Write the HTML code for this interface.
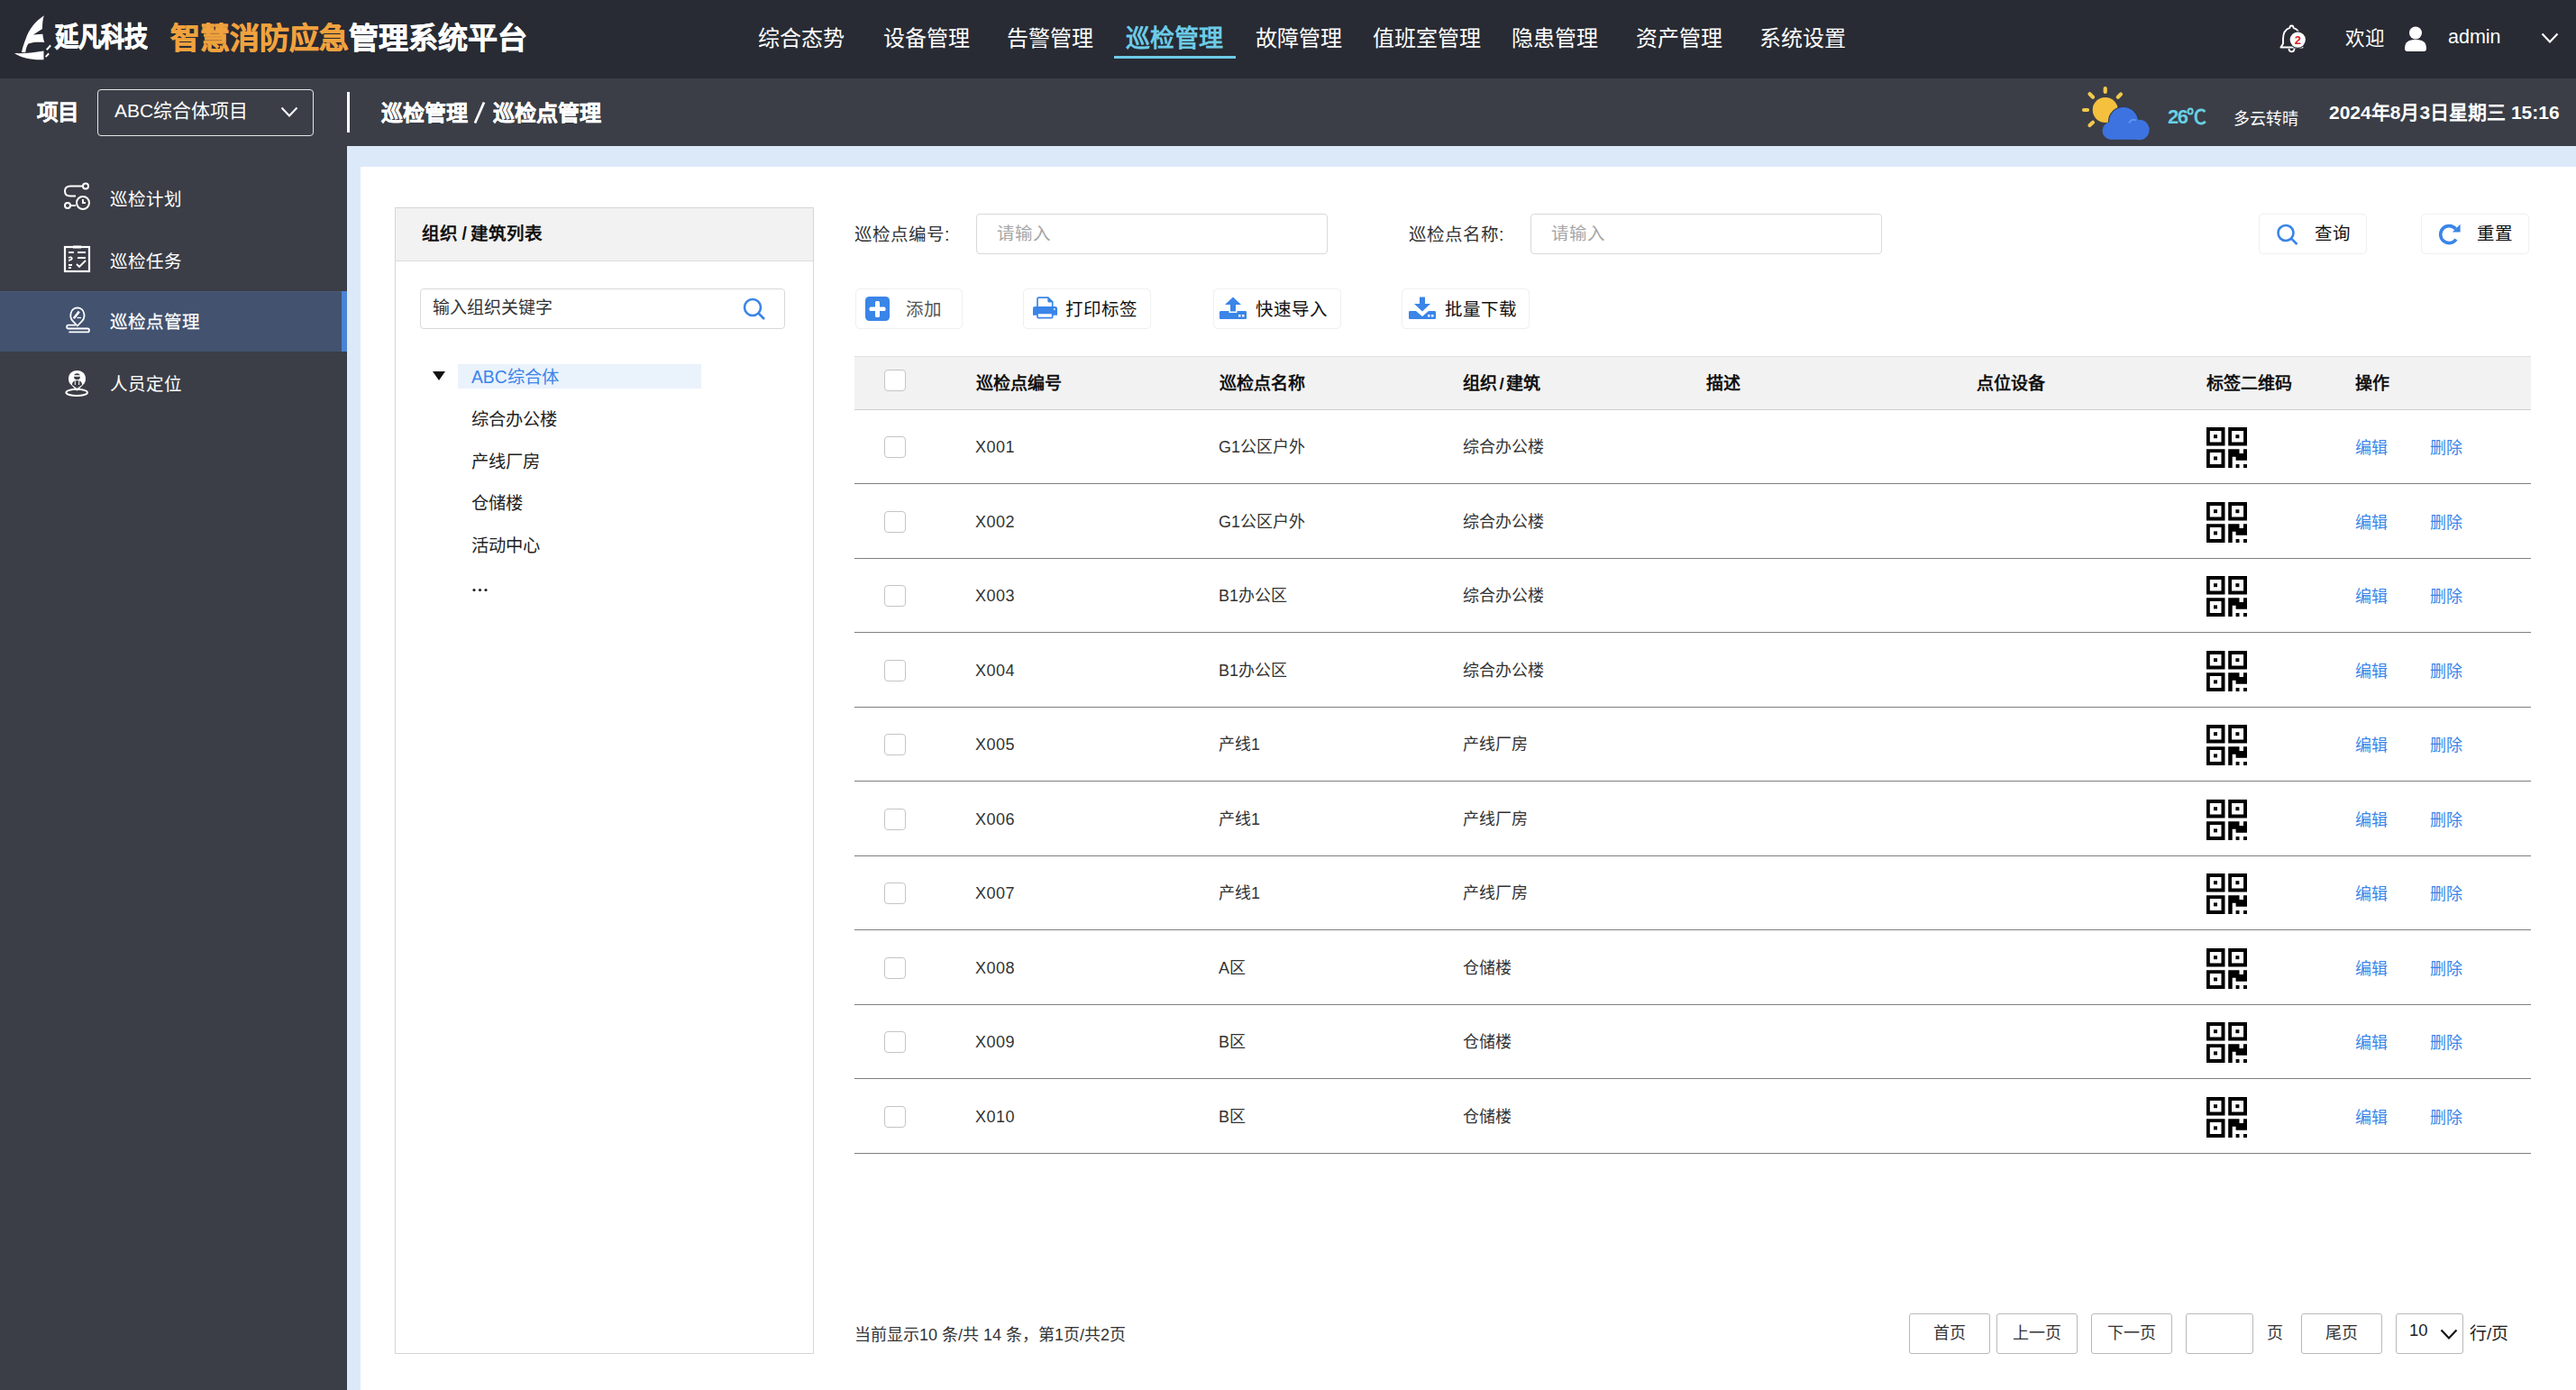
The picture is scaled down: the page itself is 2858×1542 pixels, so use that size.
<!DOCTYPE html>
<html lang="zh-CN"><head><meta charset="utf-8">
<style>
*{margin:0;padding:0;box-sizing:border-box}
html,body{width:2858px;height:1542px;overflow:hidden;background:#fff;font-family:"Liberation Sans",sans-serif;}
.a{position:absolute;line-height:1;white-space:nowrap}
#hdr{position:absolute;left:0;top:0;width:2858px;height:87px;background:#282b33}
#sub{position:absolute;left:0;top:87px;width:2858px;height:75px;background:#3b3e47}
#side{position:absolute;left:0;top:162px;width:385px;height:1380px;background:#3b3e47}
#cbg{position:absolute;left:385px;top:162px;width:2473px;height:1380px;background:#dce9f9}
#wp{position:absolute;left:400px;top:185px;width:2458px;height:1357px;background:#fff}
.nav{color:#fff;font-size:24px}
.w{color:#fff}
.btn{border:1px solid #f0f0f0;border-radius:5px;background:#fff;box-shadow:0 0 1px rgba(0,0,0,0.04)}
.th{font-size:19px;font-weight:bold;color:#111;top:416px}
.td{font-size:18px;color:#333}
.cb{width:24px;height:24px;border:1.5px solid #c4c4c4;border-radius:4px;background:#fff}
.sep{left:948px;width:1860px;height:1px;background:#7f7f7f}
.pb{top:1457px;height:45px;border:1px solid #b8b8b8;border-radius:3px;font-size:18px;color:#333;text-align:center;line-height:43px}
.lk{font-size:18px;color:#3a85e8}
</style></head><body>
<div id="hdr"></div>
<div id="sub"></div>
<div id="side"></div>
<div id="cbg"></div>
<div id="wp"></div>

<!-- HEADER -->
<svg class="a" style="left:0;top:0" width="70" height="75" viewBox="0 0 70 75">
 <path d="M48.8 17.2 C43 21 39 25 36.2 28.7 C32 34 30 39 28.7 42.7 C26.5 48 25 53 24 58 L28.2 58.2 C29 53 30 50 31.5 48.4 C37 46.5 44 46.5 49.3 47 C48 43 47.5 40 47.4 37.8 L36.9 38.5 L47 32 C47 26 47.5 21 48.8 17.2 Z" fill="#fff"/>
 <path d="M16 59 C25 59.5 38 58.5 48.5 56.5 L48.5 66.2 C36 66.8 24 64.5 16 59 Z" fill="#fff"/>
 <path d="M51 54.5 L55.5 49.5 L56.8 51.2 L52.5 56 Z" fill="#fff"/>
 <path d="M50 62.5 L53.5 58.5 L54.8 60.2 L51.2 63.8 Z" fill="#fff"/>
</svg>
<div class="a w" style="left:61px;top:26px;font-size:26px;font-weight:700;letter-spacing:-0.5px;-webkit-text-stroke:0.8px #fff;transform:scaleY(1.15);transform-origin:0 0">延凡科技</div>
<div class="a" style="left:189px;top:26px;font-size:33px;font-weight:700;color:#f0a23e;-webkit-text-stroke:0.6px currentColor">智慧消防应急<span style="color:#fff;-webkit-text-stroke:0.6px #fff">管理系统平台</span></div>
<div class="a nav" style="left:841px;top:31px">综合态势</div>
<div class="a nav" style="left:980px;top:31px">设备管理</div>
<div class="a nav" style="left:1117px;top:31px">告警管理</div>
<div class="a nav" style="left:1249px;top:30px;font-size:27px;font-weight:bold;color:#6ccbe8">巡检管理</div>
<div class="a" style="left:1236px;top:62px;width:135px;height:3px;background:#6ccbe8"></div>
<div class="a nav" style="left:1393px;top:31px">故障管理</div>
<div class="a nav" style="left:1523px;top:31px">值班室管理</div>
<div class="a nav" style="left:1677px;top:31px">隐患管理</div>
<div class="a nav" style="left:1815px;top:31px">资产管理</div>
<div class="a nav" style="left:1952px;top:31px">系统设置</div>
<!-- bell -->
<svg class="a" style="left:2520px;top:20px" width="45" height="42" viewBox="0 0 45 42">
 <path d="M22.5 8.5 C21 8.5 20.5 9.8 20.5 10.8 C15.5 12.5 13 17 13 23 L13 28.5 L10.5 32.5 L34.5 32.5 L32 28.5 L32 23 C32 17 29.5 12.5 24.5 10.8 C24.5 9.8 24 8.5 22.5 8.5 Z" fill="none" stroke="#fff" stroke-width="1.9" stroke-linejoin="round"/>
 <path d="M19.5 34 C19.5 36.5 21 37.3 22.5 37.3 C24 37.3 25.5 36.5 25.5 34" fill="none" stroke="#fff" stroke-width="1.8"/>
 <circle cx="29.3" cy="24.1" r="9.8" fill="#282b33"/>
 <circle cx="29.3" cy="24.1" r="8.6" fill="#fff"/>
 <text x="29.3" y="28.8" font-size="13" font-weight="bold" fill="#d9232d" text-anchor="middle" font-family="Liberation Sans">2</text>
</svg>
<div class="a w" style="left:2602px;top:33px;font-size:21.5px">欢迎</div>
<svg class="a" style="left:2667px;top:29px" width="26" height="28" viewBox="0 0 26 28">
 <circle cx="13" cy="7.5" r="7" fill="#fff"/>
 <path d="M1 25 C1 17 6 15 13 15 C20 15 25 17 25 25 C25 27 24 28 22 28 L4 28 C2 28 1 27 1 25 Z" fill="#fff"/>
</svg>
<div class="a w" style="left:2716px;top:31px;font-size:21.5px">admin</div>
<svg class="a" style="left:2819px;top:36px" width="20" height="13" viewBox="0 0 20 13"><path d="M1.5 1.5 L10 10.5 L18.5 1.5" fill="none" stroke="#fff" stroke-width="2.2"/></svg>

<!-- SUBHEADER -->
<div class="a w" style="left:41px;top:114px;font-size:23.5px;font-weight:bold;-webkit-text-stroke:0.4px #fff">项目</div>
<div class="a" style="left:108px;top:99px;width:240px;height:52px;border:1.5px solid #e6e6e6;border-radius:4px"></div>
<div class="a w" style="left:127px;top:112px;font-size:21px">ABC综合体项目</div>
<svg class="a" style="left:311px;top:118px" width="20" height="13" viewBox="0 0 20 13"><path d="M1.5 1.5 L10 10.5 L18.5 1.5" fill="none" stroke="#fff" stroke-width="2"/></svg>
<div class="a" style="left:385px;top:102px;width:3px;height:45px;background:#fff"></div>
<div class="a w" style="left:423px;top:114px;font-size:24px;font-weight:bold;-webkit-text-stroke:0.4px #fff">巡检管理</div><svg class="a" style="left:524px;top:112px" width="16" height="26" viewBox="0 0 16 26"><path d="M13 1.5 L3 24.5" stroke="#fff" stroke-width="2.8"/></svg><div class="a w" style="left:547px;top:114px;font-size:24px;font-weight:bold;-webkit-text-stroke:0.4px #fff">巡检点管理</div>
<!-- weather -->
<svg class="a" style="left:2300px;top:88px" width="90" height="75" viewBox="0 0 90 75">
 <g stroke="#f2c94c" stroke-width="4.2" stroke-linecap="round">
  <line x1="35.7" y1="10" x2="35.7" y2="14"/>
  <line x1="12" y1="34" x2="16" y2="34"/>
  <line x1="18.5" y1="16.3" x2="22" y2="19.8"/>
  <line x1="53" y1="16.5" x2="49.8" y2="19.8"/>
  <line x1="22" y1="47.8" x2="18.5" y2="51"/>
 </g>
 <circle cx="35.7" cy="34" r="14" fill="#f4c03e"/>
 <g fill="#3a6edb" stroke="#333844" stroke-width="1.2">
  <circle cx="56" cy="47" r="16.5"/>
 </g>
 <g fill="#3d73e0">
  <circle cx="56" cy="47.5" r="16"/>
  <circle cx="73.3" cy="56" r="11.3"/>
  <circle cx="42.5" cy="57" r="10"/>
  <rect x="42.5" y="50" width="31" height="16.8"/>
 </g>
 <path d="M62 48.5 C64 45 67 44 70 45.5" fill="none" stroke="#5f93f0" stroke-width="2"/>
</svg>
<div class="a" style="left:2405px;top:119px;font-size:22px;font-weight:bold;color:#67d0e6;letter-spacing:-1.5px">26℃</div>
<div class="a w" style="left:2478px;top:123px;font-size:18px">多云转晴</div>
<div class="a w" style="left:2584px;top:114px;font-size:21px;font-weight:bold">2024年8月3日星期三 15:16</div>

<!-- SIDEBAR -->
<div class="a" style="left:0;top:323px;width:385px;height:67px;background:#42526f;border-top:1px solid #4a5a78"></div>
<div class="a" style="left:379px;top:323px;width:6px;height:67px;background:#4a84d6"></div>
<svg class="a" style="left:70px;top:202px" width="31" height="31" viewBox="0 0 31 31" fill="none" stroke="#fff" stroke-width="2">
 <circle cx="25" cy="4.5" r="3"/>
 <path d="M22 4.5 H8 C4 4.5 2 7 2 10 C2 13 4 15.5 8 15.5 H14"/>
 <circle cx="5" cy="26" r="3"/>
 <path d="M8 26 H14"/>
 <circle cx="22" cy="23" r="7"/>
 <path d="M22 19 V23 H25"/>
</svg>
<div class="a w" style="left:122px;top:211.5px;font-size:19.5px">巡检计划</div>
<svg class="a" style="left:70px;top:271px" width="31" height="32" viewBox="0 0 31 32" fill="none" stroke="#fff" stroke-width="2.2">
 <rect x="2" y="3" width="27" height="27"/>
 <path d="M11 3 H20" stroke-width="3"/>
 <path d="M6 9 H12 M16 9 H25 M6 15 C10 13 12 17 6 18 M16 15 H25 M6 23 H10 M6 26 H9 M15 22 L18 25 L25 18" stroke-width="1.8"/>
</svg>
<div class="a w" style="left:122px;top:281px;font-size:19.5px">巡检任务</div>
<svg class="a" style="left:60px;top:330px" width="50" height="50" viewBox="0 0 50 50" fill="none" stroke="#fff">
 <path d="M25.9 31.5 L20.5 25.8 C17 22 17.3 12 25.9 11.4 C34.5 12 34.8 22 31.3 25.8 Z" stroke-width="1.8"/>
 <path d="M21.8 23.2 L27.8 15.6" stroke-width="2.6"/>
 <path d="M25.5 22.5 H30" stroke-width="1.3"/>
 <path d="M24 30.6 H15.8 C13.6 30.6 13.6 34.5 15.8 34.5 H37.3 C39.5 34.5 39.5 38.4 37.3 38.4 H16.4" stroke-width="1.8"/>
</svg>
<div class="a w" style="left:122px;top:348px;font-size:19.5px;-webkit-text-stroke:0.25px #fff">巡检点管理</div>
<svg class="a" style="left:60px;top:400px" width="50" height="50" viewBox="0 0 50 50">
 <path d="M25.5 33.8 L18.3 26.3 C14.2 22 15 11.3 25.5 11 C36 11.3 36.8 22 32.7 26.3 Z" fill="#fff"/>
 <circle cx="25.5" cy="17.8" r="3.5" fill="#3b3e47"/>
 <rect x="21" y="16.2" width="9" height="1.6" fill="#fff"/>
 <path d="M20 27 C20 23.5 22 22.2 25.5 22.2 C29 22.2 31 23.5 31 27 L25.5 31 Z" fill="#3b3e47"/>
 <path d="M23.3 22.5 V27 M27.7 22.5 V27" stroke="#fff" stroke-width="1"/>
 <ellipse cx="25.2" cy="35.4" rx="11.8" ry="3.6" fill="none" stroke="#fff" stroke-width="2"/>
</svg>
<div class="a w" style="left:122px;top:417px;font-size:19.5px">人员定位</div>

<!-- TREE PANEL -->
<div class="a" style="left:438px;top:230px;width:465px;height:1272px;border:1px solid #d6d6d6;background:#fff"></div>
<div class="a" style="left:439px;top:231px;width:463px;height:59px;background:#f2f2f2;border-bottom:1px solid #dcdcdc"></div>
<div class="a" style="left:468px;top:250px;font-size:19.5px;font-weight:bold;color:#111">组织<span style="margin:0 4.5px">/</span>建筑列表</div>
<div class="a" style="left:466px;top:320px;width:405px;height:45px;border:1px solid #d9d9d9;border-radius:4px"></div>
<div class="a" style="left:480px;top:332px;font-size:19px;color:#333">输入组织关键字</div>
<svg class="a" style="left:823px;top:330px" width="28" height="26" viewBox="0 0 28 26" fill="none" stroke="#3a85e8" stroke-width="2.6">
 <circle cx="12" cy="11" r="9"/><path d="M18.5 17.5 L25 24"/>
</svg>
<svg class="a" style="left:480px;top:412px" width="14" height="10" viewBox="0 0 14 10"><path d="M0 0 H14 L7 10 Z" fill="#111"/></svg>
<div class="a" style="left:508px;top:404px;width:270px;height:27px;background:#eaf2fc"></div>
<div class="a" style="left:523px;top:409px;font-size:19.3px;color:#3a85e8">ABC综合体</div>
<div class="a" style="left:523px;top:455.5px;font-size:19.3px;color:#222">综合办公楼</div>
<div class="a" style="left:523px;top:502.5px;font-size:19.3px;color:#222">产线厂房</div>
<div class="a" style="left:523px;top:548.5px;font-size:19.3px;color:#222">仓储楼</div>
<div class="a" style="left:523px;top:595.5px;font-size:19.3px;color:#222">活动中心</div>
<svg class="a" style="left:524px;top:652px" width="17" height="5" viewBox="0 0 17 5" fill="#222"><circle cx="2" cy="2.5" r="1.6"/><circle cx="8.5" cy="2.5" r="1.6"/><circle cx="15" cy="2.5" r="1.6"/></svg>

<!-- TOOLBAR -->
<div class="a" style="left:948px;top:251px;font-size:19.5px;color:#333">巡检点编号:</div>
<div class="a" style="left:1083px;top:237px;width:390px;height:45px;border:1px solid #d9d9d9;border-radius:4px"></div>
<div class="a" style="left:1106px;top:250px;font-size:19.5px;color:#a6a6a6">请输入</div>
<div class="a" style="left:1563px;top:251px;font-size:19.5px;color:#333">巡检点名称:</div>
<div class="a" style="left:1698px;top:237px;width:390px;height:45px;border:1px solid #d9d9d9;border-radius:4px"></div>
<div class="a" style="left:1721px;top:250px;font-size:19.5px;color:#a6a6a6">请输入</div>

<div class="a btn" style="left:2506px;top:237px;width:120px;height:45px"></div>
<svg class="a" style="left:2525px;top:248px" width="26" height="25" viewBox="0 0 26 25" fill="none" stroke="#3a85e8" stroke-width="2.6">
 <circle cx="11" cy="10.5" r="8.5"/><path d="M17.2 16.7 L23.5 23"/>
</svg>
<div class="a" style="left:2568px;top:250px;font-size:19.5px;color:#111">查询</div>
<div class="a btn" style="left:2686px;top:237px;width:120px;height:45px"></div>
<svg class="a" style="left:2705px;top:248px" width="26" height="25" viewBox="0 0 26 25">
 <path d="M20 17.5 A9.5 9.5 0 1 1 19.5 6" fill="none" stroke="#3a85e8" stroke-width="3.6"/>
 <path d="M24.6 0.8 V9.6 H15.8 Z" fill="#3a85e8"/>
</svg>
<div class="a" style="left:2748px;top:250px;font-size:19.5px;color:#111">重置</div>

<div class="a btn" style="left:949px;top:320px;width:119px;height:45px"></div>
<svg class="a" style="left:960px;top:329px" width="27" height="27" viewBox="0 0 27 27">
 <rect x="0" y="0" width="27" height="27" rx="4.5" fill="#3a85e8"/>
 <rect x="11" y="5" width="5" height="18" rx="1.5" fill="#fff"/>
 <rect x="4.5" y="11.5" width="18" height="4.5" rx="1.5" fill="#fff"/>
</svg>
<div class="a" style="left:1005px;top:333.5px;font-size:19.5px;color:#555">添加</div>

<div class="a btn" style="left:1135px;top:320px;width:142px;height:45px"></div>
<svg class="a" style="left:1140px;top:322px" width="40" height="40" viewBox="0 0 40 40">
 <path d="M11 19 V9.7 C11 8.8 11.6 8.2 12.5 8.2 H22.8 L27.7 12.8 V19" fill="none" stroke="#3a85e8" stroke-width="1.7"/>
 <path d="M22.3 8 L28.5 13.6 H24.2 C23.1 13.6 22.3 12.8 22.3 11.8 Z" fill="#3a85e8"/>
 <path d="M6 20.2 C6 19 7 18.1 8.2 18.1 H30.8 C32 18.1 33 19 33 20.2 V27.8 H6 Z" fill="#3a85e8"/>
 <circle cx="29.8" cy="21" r="1" fill="#d8f0ff"/>
 <rect x="11" y="25.4" width="16.7" height="5.3" rx="1.2" fill="#fff" stroke="#3a85e8" stroke-width="1.7"/>
</svg>
<div class="a" style="left:1182px;top:333.5px;font-size:19.5px;color:#111">打印标签</div>

<div class="a btn" style="left:1346px;top:320px;width:142px;height:45px"></div>
<svg class="a" style="left:1353px;top:329px" width="30" height="25" viewBox="0 0 30 25">
 <path d="M15 0.5 L24 9 H18 V16.5 H12 V9 H6 Z" fill="#3a85e8"/>
 <path d="M0 17.5 C0 16.5 0.5 16 1.5 16 H10.5 V18 H19.5 V16 H28.5 C29.5 16 30 16.5 30 17.5 V23.5 C30 24.5 29.5 25 28.5 25 H1.5 C0.5 25 0 24.5 0 23.5 Z" fill="#3a85e8"/>
 <rect x="21" y="20" width="2.5" height="2.5" fill="#fff"/><rect x="25" y="20" width="2.5" height="2.5" fill="#fff"/>
</svg>
<div class="a" style="left:1393px;top:333.5px;font-size:19.5px;color:#111">快速导入</div>

<div class="a btn" style="left:1555px;top:320px;width:142px;height:45px"></div>
<svg class="a" style="left:1563px;top:329px" width="30" height="25" viewBox="0 0 30 25">
 <path d="M12 0.5 H18 V8 H24 L15 16.5 L6 8 H12 Z" fill="#3a85e8"/>
 <path d="M0 17.5 C0 16.5 0.5 16 1.5 16 H8 L15 22 L22 16 H28.5 C29.5 16 30 16.5 30 17.5 V23.5 C30 24.5 29.5 25 28.5 25 H1.5 C0.5 25 0 24.5 0 23.5 Z" fill="#3a85e8"/>
 <rect x="21" y="20" width="2.5" height="2.5" fill="#fff"/><rect x="25" y="20" width="2.5" height="2.5" fill="#fff"/>
</svg>
<div class="a" style="left:1603px;top:333.5px;font-size:19.5px;color:#111">批量下载</div>

<!-- TABLE -->
<div class="a" style="left:948px;top:395px;width:1860px;height:60px;background:#f2f2f2;border-top:1px solid #e0e0e0;border-bottom:1px solid #cfcfcf"></div>
<div class="a cb" style="left:981px;top:410px"></div>
<div class="a th" style="left:1083px">巡检点编号</div>
<div class="a th" style="left:1353px">巡检点名称</div>
<div class="a th" style="left:1623px">组织<span style="margin:0 2.5px">/</span>建筑</div>
<div class="a th" style="left:1893px">描述</div>
<div class="a th" style="left:2193px">点位设备</div>
<div class="a th" style="left:2448px">标签二维码</div>
<div class="a th" style="left:2613px">操作</div>
<div class="a cb" style="left:981px;top:484px"></div>
<div class="a td" style="left:1082px;top:487px;letter-spacing:0.5px">X001</div>
<div class="a td" style="left:1352px;top:487px">G1公区户外</div>
<div class="a td" style="left:1623px;top:487px">综合办公楼</div>
<svg class="a" style="left:2448px;top:474px" width="45" height="45" viewBox="0 0 45 45"><g fill="#000"><path d="M0 0H20.5V20.5H0Z M3.8 3.9V16.5H16.5V3.9Z"/><rect x="8" y="8.2" width="4" height="4"/><path d="M24.2 0H45V20.5H24.2Z M28 3.9V16.5H41.1V3.9Z"/><rect x="32.4" y="8.2" width="4" height="4"/><path d="M0 24.2H20.5V45H0Z M3.8 28V41H16.5V28Z"/><rect x="8" y="32.4" width="4" height="4"/><path d="M24.2 24.2H36.5V28.9H41V24.2H45V36.7H32.6V32.8H28.7V45H24.2Z"/><rect x="32.6" y="41" width="3.9" height="4"/><rect x="41" y="41" width="4" height="4"/></g></svg>
<div class="a lk" style="left:2613px;top:488px">编辑</div>
<div class="a lk" style="left:2696px;top:488px">删除</div>
<div class="a sep" style="top:536px"></div>
<div class="a cb" style="left:981px;top:567px"></div>
<div class="a td" style="left:1082px;top:570px;letter-spacing:0.5px">X002</div>
<div class="a td" style="left:1352px;top:570px">G1公区户外</div>
<div class="a td" style="left:1623px;top:570px">综合办公楼</div>
<svg class="a" style="left:2448px;top:557px" width="45" height="45" viewBox="0 0 45 45"><g fill="#000"><path d="M0 0H20.5V20.5H0Z M3.8 3.9V16.5H16.5V3.9Z"/><rect x="8" y="8.2" width="4" height="4"/><path d="M24.2 0H45V20.5H24.2Z M28 3.9V16.5H41.1V3.9Z"/><rect x="32.4" y="8.2" width="4" height="4"/><path d="M0 24.2H20.5V45H0Z M3.8 28V41H16.5V28Z"/><rect x="8" y="32.4" width="4" height="4"/><path d="M24.2 24.2H36.5V28.9H41V24.2H45V36.7H32.6V32.8H28.7V45H24.2Z"/><rect x="32.6" y="41" width="3.9" height="4"/><rect x="41" y="41" width="4" height="4"/></g></svg>
<div class="a lk" style="left:2613px;top:571px">编辑</div>
<div class="a lk" style="left:2696px;top:571px">删除</div>
<div class="a sep" style="top:619px"></div>
<div class="a cb" style="left:981px;top:649px"></div>
<div class="a td" style="left:1082px;top:652px;letter-spacing:0.5px">X003</div>
<div class="a td" style="left:1352px;top:652px">B1办公区</div>
<div class="a td" style="left:1623px;top:652px">综合办公楼</div>
<svg class="a" style="left:2448px;top:639px" width="45" height="45" viewBox="0 0 45 45"><g fill="#000"><path d="M0 0H20.5V20.5H0Z M3.8 3.9V16.5H16.5V3.9Z"/><rect x="8" y="8.2" width="4" height="4"/><path d="M24.2 0H45V20.5H24.2Z M28 3.9V16.5H41.1V3.9Z"/><rect x="32.4" y="8.2" width="4" height="4"/><path d="M0 24.2H20.5V45H0Z M3.8 28V41H16.5V28Z"/><rect x="8" y="32.4" width="4" height="4"/><path d="M24.2 24.2H36.5V28.9H41V24.2H45V36.7H32.6V32.8H28.7V45H24.2Z"/><rect x="32.6" y="41" width="3.9" height="4"/><rect x="41" y="41" width="4" height="4"/></g></svg>
<div class="a lk" style="left:2613px;top:653px">编辑</div>
<div class="a lk" style="left:2696px;top:653px">删除</div>
<div class="a sep" style="top:701px"></div>
<div class="a cb" style="left:981px;top:732px"></div>
<div class="a td" style="left:1082px;top:735px;letter-spacing:0.5px">X004</div>
<div class="a td" style="left:1352px;top:735px">B1办公区</div>
<div class="a td" style="left:1623px;top:735px">综合办公楼</div>
<svg class="a" style="left:2448px;top:722px" width="45" height="45" viewBox="0 0 45 45"><g fill="#000"><path d="M0 0H20.5V20.5H0Z M3.8 3.9V16.5H16.5V3.9Z"/><rect x="8" y="8.2" width="4" height="4"/><path d="M24.2 0H45V20.5H24.2Z M28 3.9V16.5H41.1V3.9Z"/><rect x="32.4" y="8.2" width="4" height="4"/><path d="M0 24.2H20.5V45H0Z M3.8 28V41H16.5V28Z"/><rect x="8" y="32.4" width="4" height="4"/><path d="M24.2 24.2H36.5V28.9H41V24.2H45V36.7H32.6V32.8H28.7V45H24.2Z"/><rect x="32.6" y="41" width="3.9" height="4"/><rect x="41" y="41" width="4" height="4"/></g></svg>
<div class="a lk" style="left:2613px;top:736px">编辑</div>
<div class="a lk" style="left:2696px;top:736px">删除</div>
<div class="a sep" style="top:784px"></div>
<div class="a cb" style="left:981px;top:814px"></div>
<div class="a td" style="left:1082px;top:817px;letter-spacing:0.5px">X005</div>
<div class="a td" style="left:1352px;top:817px">产线1</div>
<div class="a td" style="left:1623px;top:817px">产线厂房</div>
<svg class="a" style="left:2448px;top:804px" width="45" height="45" viewBox="0 0 45 45"><g fill="#000"><path d="M0 0H20.5V20.5H0Z M3.8 3.9V16.5H16.5V3.9Z"/><rect x="8" y="8.2" width="4" height="4"/><path d="M24.2 0H45V20.5H24.2Z M28 3.9V16.5H41.1V3.9Z"/><rect x="32.4" y="8.2" width="4" height="4"/><path d="M0 24.2H20.5V45H0Z M3.8 28V41H16.5V28Z"/><rect x="8" y="32.4" width="4" height="4"/><path d="M24.2 24.2H36.5V28.9H41V24.2H45V36.7H32.6V32.8H28.7V45H24.2Z"/><rect x="32.6" y="41" width="3.9" height="4"/><rect x="41" y="41" width="4" height="4"/></g></svg>
<div class="a lk" style="left:2613px;top:818px">编辑</div>
<div class="a lk" style="left:2696px;top:818px">删除</div>
<div class="a sep" style="top:866px"></div>
<div class="a cb" style="left:981px;top:897px"></div>
<div class="a td" style="left:1082px;top:900px;letter-spacing:0.5px">X006</div>
<div class="a td" style="left:1352px;top:900px">产线1</div>
<div class="a td" style="left:1623px;top:900px">产线厂房</div>
<svg class="a" style="left:2448px;top:887px" width="45" height="45" viewBox="0 0 45 45"><g fill="#000"><path d="M0 0H20.5V20.5H0Z M3.8 3.9V16.5H16.5V3.9Z"/><rect x="8" y="8.2" width="4" height="4"/><path d="M24.2 0H45V20.5H24.2Z M28 3.9V16.5H41.1V3.9Z"/><rect x="32.4" y="8.2" width="4" height="4"/><path d="M0 24.2H20.5V45H0Z M3.8 28V41H16.5V28Z"/><rect x="8" y="32.4" width="4" height="4"/><path d="M24.2 24.2H36.5V28.9H41V24.2H45V36.7H32.6V32.8H28.7V45H24.2Z"/><rect x="32.6" y="41" width="3.9" height="4"/><rect x="41" y="41" width="4" height="4"/></g></svg>
<div class="a lk" style="left:2613px;top:901px">编辑</div>
<div class="a lk" style="left:2696px;top:901px">删除</div>
<div class="a sep" style="top:949px"></div>
<div class="a cb" style="left:981px;top:979px"></div>
<div class="a td" style="left:1082px;top:982px;letter-spacing:0.5px">X007</div>
<div class="a td" style="left:1352px;top:982px">产线1</div>
<div class="a td" style="left:1623px;top:982px">产线厂房</div>
<svg class="a" style="left:2448px;top:969px" width="45" height="45" viewBox="0 0 45 45"><g fill="#000"><path d="M0 0H20.5V20.5H0Z M3.8 3.9V16.5H16.5V3.9Z"/><rect x="8" y="8.2" width="4" height="4"/><path d="M24.2 0H45V20.5H24.2Z M28 3.9V16.5H41.1V3.9Z"/><rect x="32.4" y="8.2" width="4" height="4"/><path d="M0 24.2H20.5V45H0Z M3.8 28V41H16.5V28Z"/><rect x="8" y="32.4" width="4" height="4"/><path d="M24.2 24.2H36.5V28.9H41V24.2H45V36.7H32.6V32.8H28.7V45H24.2Z"/><rect x="32.6" y="41" width="3.9" height="4"/><rect x="41" y="41" width="4" height="4"/></g></svg>
<div class="a lk" style="left:2613px;top:983px">编辑</div>
<div class="a lk" style="left:2696px;top:983px">删除</div>
<div class="a sep" style="top:1031px"></div>
<div class="a cb" style="left:981px;top:1062px"></div>
<div class="a td" style="left:1082px;top:1065px;letter-spacing:0.5px">X008</div>
<div class="a td" style="left:1352px;top:1065px">A区</div>
<div class="a td" style="left:1623px;top:1065px">仓储楼</div>
<svg class="a" style="left:2448px;top:1052px" width="45" height="45" viewBox="0 0 45 45"><g fill="#000"><path d="M0 0H20.5V20.5H0Z M3.8 3.9V16.5H16.5V3.9Z"/><rect x="8" y="8.2" width="4" height="4"/><path d="M24.2 0H45V20.5H24.2Z M28 3.9V16.5H41.1V3.9Z"/><rect x="32.4" y="8.2" width="4" height="4"/><path d="M0 24.2H20.5V45H0Z M3.8 28V41H16.5V28Z"/><rect x="8" y="32.4" width="4" height="4"/><path d="M24.2 24.2H36.5V28.9H41V24.2H45V36.7H32.6V32.8H28.7V45H24.2Z"/><rect x="32.6" y="41" width="3.9" height="4"/><rect x="41" y="41" width="4" height="4"/></g></svg>
<div class="a lk" style="left:2613px;top:1066px">编辑</div>
<div class="a lk" style="left:2696px;top:1066px">删除</div>
<div class="a sep" style="top:1114px"></div>
<div class="a cb" style="left:981px;top:1144px"></div>
<div class="a td" style="left:1082px;top:1147px;letter-spacing:0.5px">X009</div>
<div class="a td" style="left:1352px;top:1147px">B区</div>
<div class="a td" style="left:1623px;top:1147px">仓储楼</div>
<svg class="a" style="left:2448px;top:1134px" width="45" height="45" viewBox="0 0 45 45"><g fill="#000"><path d="M0 0H20.5V20.5H0Z M3.8 3.9V16.5H16.5V3.9Z"/><rect x="8" y="8.2" width="4" height="4"/><path d="M24.2 0H45V20.5H24.2Z M28 3.9V16.5H41.1V3.9Z"/><rect x="32.4" y="8.2" width="4" height="4"/><path d="M0 24.2H20.5V45H0Z M3.8 28V41H16.5V28Z"/><rect x="8" y="32.4" width="4" height="4"/><path d="M24.2 24.2H36.5V28.9H41V24.2H45V36.7H32.6V32.8H28.7V45H24.2Z"/><rect x="32.6" y="41" width="3.9" height="4"/><rect x="41" y="41" width="4" height="4"/></g></svg>
<div class="a lk" style="left:2613px;top:1148px">编辑</div>
<div class="a lk" style="left:2696px;top:1148px">删除</div>
<div class="a sep" style="top:1196px"></div>
<div class="a cb" style="left:981px;top:1227px"></div>
<div class="a td" style="left:1082px;top:1230px;letter-spacing:0.5px">X010</div>
<div class="a td" style="left:1352px;top:1230px">B区</div>
<div class="a td" style="left:1623px;top:1230px">仓储楼</div>
<svg class="a" style="left:2448px;top:1217px" width="45" height="45" viewBox="0 0 45 45"><g fill="#000"><path d="M0 0H20.5V20.5H0Z M3.8 3.9V16.5H16.5V3.9Z"/><rect x="8" y="8.2" width="4" height="4"/><path d="M24.2 0H45V20.5H24.2Z M28 3.9V16.5H41.1V3.9Z"/><rect x="32.4" y="8.2" width="4" height="4"/><path d="M0 24.2H20.5V45H0Z M3.8 28V41H16.5V28Z"/><rect x="8" y="32.4" width="4" height="4"/><path d="M24.2 24.2H36.5V28.9H41V24.2H45V36.7H32.6V32.8H28.7V45H24.2Z"/><rect x="32.6" y="41" width="3.9" height="4"/><rect x="41" y="41" width="4" height="4"/></g></svg>
<div class="a lk" style="left:2613px;top:1231px">编辑</div>
<div class="a lk" style="left:2696px;top:1231px">删除</div>
<div class="a sep" style="top:1279px"></div>

<!-- FOOTER -->
<div class="a" style="left:948px;top:1472px;font-size:18px;color:#333">当前显示10 条/共 14 条，第1页/共2页</div>
<div class="a pb" style="left:2118px;width:90px">首页</div>
<div class="a pb" style="left:2215px;width:90px">上一页</div>
<div class="a pb" style="left:2320px;width:90px">下一页</div>
<div class="a pb" style="left:2425px;width:75px"></div>
<div class="a" style="left:2515px;top:1470px;font-size:18px;color:#333">页</div>
<div class="a pb" style="left:2553px;width:90px">尾页</div>
<div class="a pb" style="left:2658px;width:75px"></div>
<div class="a" style="left:2673px;top:1467px;font-size:18.5px;color:#222">10</div>
<svg class="a" style="left:2707px;top:1474px" width="20" height="13" viewBox="0 0 20 13"><path d="M1.5 1.5 L10 10.5 L18.5 1.5" fill="none" stroke="#111" stroke-width="2.2"/></svg>
<div class="a" style="left:2740px;top:1470px;font-size:19px;color:#222">行/页</div>
</body></html>
